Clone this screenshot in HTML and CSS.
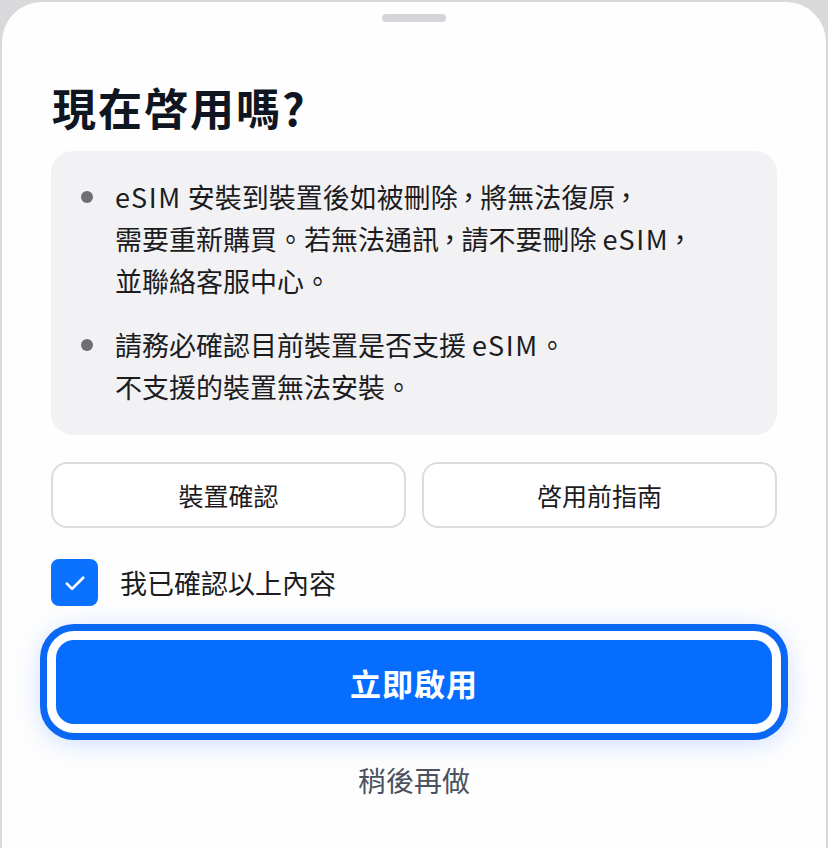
FILE: index.html
```html
<!DOCTYPE html>
<html lang="zh-Hant">
<head>
    <meta charset="UTF-8">
    <meta name="viewport" content="width=device-width, initial-scale=1.0">
    <title>現在啓用嗎？</title>
    <link rel="stylesheet" href="styles.css">
</head>
<body>
    <div class="sheet">
        <div class="handle"></div>

        <h1 class="title">現在啓用嗎?</h1>

        <ul class="notice">
            <li><span><span class="latin">eSIM</span> 安裝到裝置後如被刪除<span class="comma">，</span>將無法復原<span class="comma">，</span><br>需要重新購買。若無法通訊<span class="comma">，</span>請不要刪除 <span class="latin">eSIM</span><span class="comma">，</span><br>並聯絡客服中心。</span></li>
            <li><span>請務必確認目前裝置是否支援 <span class="latin">eSIM</span>。<br>不支援的裝置無法安裝。</span></li>
        </ul>

        <div class="links">
            <button class="link-btn">裝置確認</button>
            <button class="link-btn">啓用前指南</button>
        </div>

        <label class="confirm">
            <span class="checkbox">
                <svg viewBox="0 0 24 24" width="28" height="28">
                    <path d="M5 12.5l4.5 4.5L19 7.5" fill="none" stroke="#fff" stroke-width="2.3" stroke-linecap="round" stroke-linejoin="round"/>
                </svg>
            </span>
            <span class="confirm-text">我已確認以上內容</span>
        </label>

        <button class="primary">立即啟用</button>

        <div class="later">稍後再做</div>
    </div>
</body>
</html>
```

FILE: styles.css
```css
* {
    box-sizing: border-box;
}

body {
    margin: 0;
    background: #d9d9dc;
    font-family: "Noto Sans CJK TC", "Noto Sans", sans-serif;
    color: #1c1c1e;
}

.sheet {
    margin: 2px 2px 0;
    min-height: 846px;
    background: #fefefe;
    border-radius: 40px 40px 0 0;
    padding: 12px 49px 0;
}

.handle {
    width: 64px;
    height: 8px;
    border-radius: 4px;
    background: #d4d4d9;
    margin: 0 auto;
}

.title {
    margin: 57px 0 15px 1px;
    font-size: 44px;
    line-height: 57px;
    font-weight: 700;
    letter-spacing: 2px;
    color: #0f1521;
}

.notice {
    list-style: none;
    margin: 0;
    padding: 25px 30px 27px;
    background: #f2f2f5;
    border-radius: 22px;
}

.notice li {
    display: flex;
    font-size: 27px;
    line-height: 42px;
    color: #1c1c1e;
}

.notice li::before {
    content: "";
    flex: none;
    width: 12px;
    height: 12px;
    margin: 15px 22px 0 0;
    border-radius: 50%;
    background: #6e6e73;
}

.notice li + li {
    margin-top: 22px;
}

.latin {
    letter-spacing: 0.06em;
}

/* half-width commas inside the notice text */
.comma {
    font-feature-settings: "halt";
    margin: 0 5px 0 4px;
}

.links {
    display: flex;
    gap: 16px;
    margin-top: 27px;
}

.link-btn {
    flex: 1;
    height: 66px;
    border: 2px solid #dcdce0;
    border-radius: 16px;
    background: #fff;
    font-family: inherit;
    font-size: 25px;
    color: #1c1c1e;
}

.confirm {
    display: flex;
    align-items: center;
    gap: 22px;
    margin-top: 31px;
}

.checkbox {
    width: 47px;
    height: 47px;
    border-radius: 8px;
    background: #0a72ff;
    display: flex;
    align-items: center;
    justify-content: center;
}

.confirm-text {
    font-size: 27px;
    color: #1c1c1e;
}

.primary {
    display: block;
    width: calc(100% - 10px);
    height: 84px;
    margin: 34px 5px 0;
    border: none;
    border-radius: 18px;
    background: #066dff;
    color: #fff;
    font-family: inherit;
    font-size: 31px;
    font-weight: 700;
    letter-spacing: 1px;
    box-shadow: 0 0 0 9px #fff, 0 0 0 16px #0a68f5, 0 4px 26px 14px rgba(40, 110, 255, 0.25);
}

.later {
    margin-top: 39px;
    text-align: center;
    font-size: 28px;
    line-height: 34px;
    color: #4a5160;
}
```
